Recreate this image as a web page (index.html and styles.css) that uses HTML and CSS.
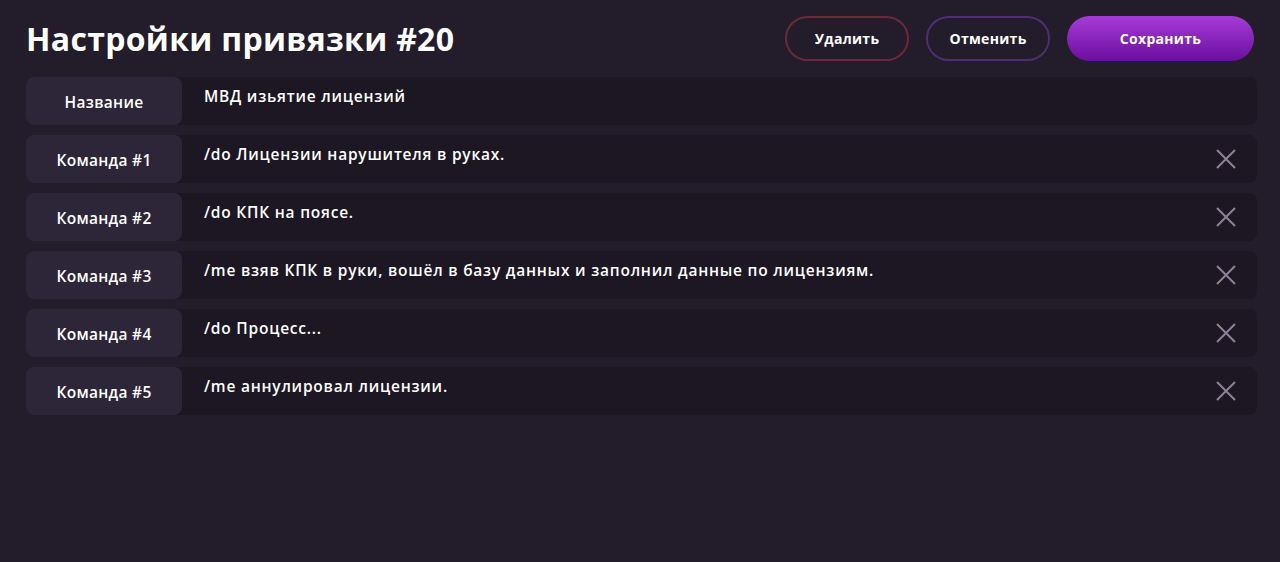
FILE: index.html
```html
<!DOCTYPE html>
<html lang="ru">
<head>
    <meta charset="UTF-8">
    <meta name="viewport" content="width=device-width, initial-scale=1.0">
    <title>Настройки привязки</title>
    <link rel="stylesheet" href="styles.css">
</head>
<body>
    <div class="page">
        <!-- Шапка -->
        <div class="header">
            <h1>Настройки привязки #20</h1>
            <div class="actions">
                <button class="btn btn-delete">Удалить</button>
                <button class="btn btn-cancel">Отменить</button>
                <button class="btn btn-save">Сохранить</button>
            </div>
        </div>

        <!-- Поля -->
        <div class="rows">
            <div class="row">
                <div class="label">Название</div>
                <div class="value">МВД изьятие лицензий</div>
            </div>
            <div class="row">
                <div class="label">Команда #1</div>
                <div class="value">/do Лицензии нарушителя в руках.</div>
                <span class="remove"><svg viewBox="0 0 20 20"><path d="M1 1L19 19M19 1L1 19"/></svg></span>
            </div>
            <div class="row">
                <div class="label">Команда #2</div>
                <div class="value">/do КПК на поясе.</div>
                <span class="remove"><svg viewBox="0 0 20 20"><path d="M1 1L19 19M19 1L1 19"/></svg></span>
            </div>
            <div class="row">
                <div class="label">Команда #3</div>
                <div class="value">/me взяв КПК в руки, вошёл в базу данных и заполнил данные по лицензиям.</div>
                <span class="remove"><svg viewBox="0 0 20 20"><path d="M1 1L19 19M19 1L1 19"/></svg></span>
            </div>
            <div class="row">
                <div class="label">Команда #4</div>
                <div class="value">/do Процесс...</div>
                <span class="remove"><svg viewBox="0 0 20 20"><path d="M1 1L19 19M19 1L1 19"/></svg></span>
            </div>
            <div class="row">
                <div class="label">Команда #5</div>
                <div class="value">/me аннулировал лицензии.</div>
                <span class="remove"><svg viewBox="0 0 20 20"><path d="M1 1L19 19M19 1L1 19"/></svg></span>
            </div>
        </div>
    </div>
</body>
</html>
```

FILE: styles.css
```css
body {
    margin: 0;
    background-color: #221c2b;
    font-family: 'Open Sans', 'Noto Sans', sans-serif;
    color: #ffffff;
}

.page {
    padding: 16px 23px 0 26px;
}

.header {
    display: flex;
    justify-content: space-between;
    align-items: center;
    height: 45px;
    padding-right: 3px;
}

h1 {
    margin: 0;
    font-size: 32px;
    font-weight: 700;
    letter-spacing: 0.3px;
}

.actions {
    display: flex;
    gap: 17px;
}

.btn {
    height: 45px;
    border-radius: 23px;
    font-family: 'Open Sans', sans-serif;
    font-size: 14px;
    font-weight: 700;
    color: #ffffff;
    background: transparent;
    cursor: pointer;
    letter-spacing: 0.3px;
}

.btn-delete {
    width: 124px;
    border: 2px solid #6a2a36;
}

.btn-cancel {
    width: 124px;
    border: 2px solid #4d2f72;
}

.btn-save {
    width: 187px;
    border: none;
    background: linear-gradient(#a63bd6, #6a0f9e);
}

.rows {
    margin-top: 16px;
    display: flex;
    flex-direction: column;
    gap: 10px;
}

.row {
    display: flex;
    align-items: stretch;
    height: 48px;
    background-color: #1d1724;
    border-radius: 8px;
}

.label {
    width: 156px;
    flex-shrink: 0;
    display: flex;
    align-items: center;
    justify-content: center;
    padding-top: 1px;
    box-sizing: border-box;
    background-color: #2d2538;
    border-radius: 8px;
    font-size: 15.5px;
    font-weight: 600;
    letter-spacing: 0.3px;
}

.value {
    flex: 1;
    padding: 8px 0 0 22px;
    font-size: 15.5px;
    font-weight: 600;
    letter-spacing: 0.78px;
}

.remove {
    display: flex;
    align-items: center;
    padding-right: 21px;
}

.remove svg {
    width: 20px;
    height: 20px;
    stroke: #8b8395;
    stroke-width: 2;
    fill: none;
}
```
